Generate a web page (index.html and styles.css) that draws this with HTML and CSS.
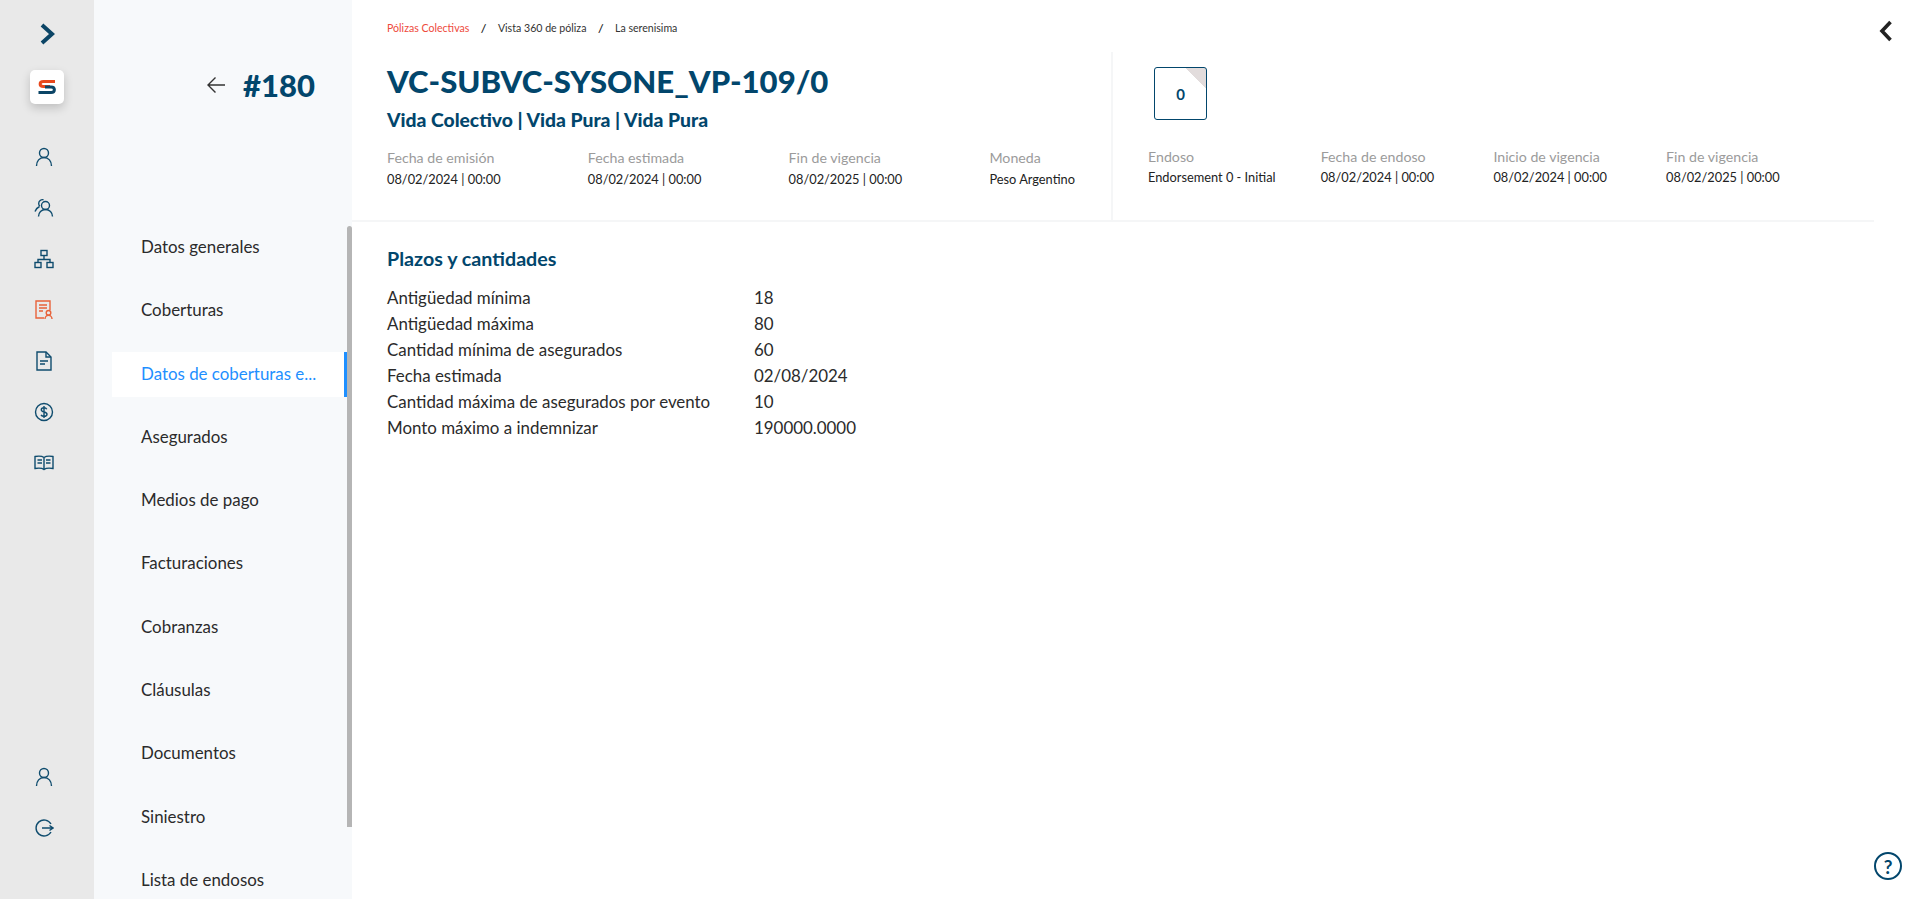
FILE: index.html
```html
<!DOCTYPE html>
<html>
<head>
    <meta charset="utf-8">
    <meta name="viewport" content="width=device-width, initial-scale=1">
    <title>Vista 360 de poliza</title>
    <link rel="stylesheet" href="styles.css">
</head>
<body>
<div class="app">
    <aside class="rail">
        <button class="rail-toggle" aria-label="Expandir">
            <svg width="18" height="22" viewBox="0 0 18 22"><path d="M4 2l10 9-10 9" fill="none" stroke="#0b4566" stroke-width="4"/></svg>
        </button>
        <div class="logo">
            <svg width="20" height="16" viewBox="0 0 20 16">
                <path d="M18 2.500H6.500C2 2.500 2 7.500 6.500 7.500H13" fill="none" stroke="#e8481c" stroke-width="3"/>
                <path d="M1.500 13.500H14c4.500 0 4.500-5.500 0-5.500H8" fill="none" stroke="#0b4566" stroke-width="3"/>
            </svg>
        </div>
        <nav class="rail-icons">
            <a class="rail-icon"><svg width="20" height="20" viewBox="0 0 20 20"><circle cx="10" cy="6" r="4.500"/><path d="M2.500 19c0-5 3-8.500 7.500-8.500s7.500 3.500 7.500 8.500"/></svg></a>
            <a class="rail-icon"><svg width="20" height="20" viewBox="0 0 20 20"><circle cx="11.500" cy="7.500" r="4"/><path d="M4.500 18.500c0-4 3-7 7-7s7 3 7 7"/><path d="M9.500 1.800a3.800 3.800 0 0 0-4.800 3.700c0 1 .4 2 1.100 2.700M5.500 8.500c-2 1-3.800 3-4.500 5"/></svg></a>
            <a class="rail-icon"><svg width="20" height="20" viewBox="0 0 20 20"><rect x="7" y="1.500" width="6" height="5"/><rect x="1" y="13.500" width="6" height="5"/><rect x="13" y="13.500" width="6" height="5"/><path d="M10 6.500v4M4 13.500v-3h12v3"/></svg></a>
            <a class="rail-icon active"><svg width="20" height="20" viewBox="0 0 20 20"><path d="M10 18H2V1h14v9"/><path d="M5 5h8M5 8h8M5 11h4"/><circle cx="14.500" cy="12.800" r="2.300"/><path d="M11 19c0-2 1.500-3.700 3.500-3.700s3.500 1.700 3.500 3.700"/></svg></a>
            <a class="rail-icon"><svg width="20" height="20" viewBox="0 0 20 20"><path d="M3 1h9l5 5v13H3z"/><path d="M12 1v5h5M6 10h8M6 13h5"/></svg></a>
            <a class="rail-icon"><svg width="20" height="20" viewBox="0 0 20 20"><circle cx="10" cy="10" r="8.500"/><path d="M12.800 7.200c-.5-1-1.500-1.500-2.800-1.500-1.500 0-2.700.8-2.700 2.100 0 3 5.700 1.500 5.700 4.400 0 1.300-1.300 2.100-3 2.100-1.300 0-2.400-.5-3-1.500M10 4v12"/></svg></a>
            <a class="rail-icon"><svg width="20" height="20" viewBox="0 0 20 20"><path d="M10 4.500C8 3 4 3 1 3.500v12c3-.5 7-.5 9 1 2-1.500 6-1.500 9-1v-12C16 3 12 3 10 4.500zM10 4.500v12"/><path d="M3.500 7H8M3.500 10H8M12 7h4.500M12 10h4.500"/></svg></a>
        </nav>
        <div class="rail-bottom">
            <a class="rail-icon"><svg width="20" height="20" viewBox="0 0 20 20"><circle cx="10" cy="6" r="4.500"/><path d="M2.500 19c0-5 3-8.500 7.500-8.500s7.500 3.500 7.500 8.500"/></svg></a>
            <a class="rail-icon"><svg width="20" height="20" viewBox="0 0 20 20"><path d="M17 6a8 8 0 1 0 0 8"/><path d="M8 10h11M15.500 7.500L19 10l-3.500 2.500"/></svg></a>
        </div>
    </aside>

    <aside class="side">
        <div class="side-head">
            <svg width="20" height="18" viewBox="0 0 20 18"><path d="M19 9H2M9.500 1.500L2 9l7.500 7.500" fill="none" stroke="#333" stroke-width="1.400"/></svg>
            <span class="side-id">#180</span>
        </div>
        <div class="side-scroll">
            <ul class="side-menu">
                <li>Datos generales</li>
                <li>Coberturas</li>
                <li class="active">Datos de coberturas e...</li>
                <li>Asegurados</li>
                <li>Medios de pago</li>
                <li>Facturaciones</li>
                <li>Cobranzas</li>
                <li>Cláusulas</li>
                <li>Documentos</li>
                <li>Siniestro</li>
                <li>Lista de endosos</li>
            </ul>
            <div class="thumb"></div>
        </div>
    </aside>

    <main class="main">
        <div class="crumbs">
            <span class="crumb-first">Pólizas Colectivas</span>
            <i>/</i>
            <span>Vista 360 de póliza</span>
            <i>/</i>
            <span>La serenisima</span>
        </div>
        <button class="collapse" aria-label="Cerrar">
            <svg width="14" height="22" viewBox="0 0 14 22"><path d="M11.500 2L3 11l8.500 9" fill="none" stroke="#222" stroke-width="3.600"/></svg>
        </button>

        <header class="head">
            <section class="head-left">
                <h1>VC-SUBVC-SYSONE_VP-109/0</h1>
                <h2>Vida Colectivo | Vida Pura | Vida Pura</h2>
                <div class="meta meta-left">
                    <div><label>Fecha de emisión</label><span>08/02/2024 | 00:00</span></div>
                    <div><label>Fecha estimada</label><span>08/02/2024 | 00:00</span></div>
                    <div><label>Fin de vigencia</label><span>08/02/2025 | 00:00</span></div>
                    <div><label>Moneda</label><span>Peso Argentino</span></div>
                </div>
            </section>
            <section class="head-right">
                <div class="endoso-card">0</div>
                <div class="meta meta-right">
                    <div><label>Endoso</label><span>Endorsement 0 - Initial</span></div>
                    <div><label>Fecha de endoso</label><span>08/02/2024 | 00:00</span></div>
                    <div><label>Inicio de vigencia</label><span>08/02/2024 | 00:00</span></div>
                    <div><label>Fin de vigencia</label><span>08/02/2025 | 00:00</span></div>
                </div>
            </section>
        </header>

        <section class="details">
            <h3>Plazos y cantidades</h3>
            <dl class="terms">
                <dt>Antigüedad mínima</dt><dd>18</dd>
                <dt>Antigüedad máxima</dt><dd>80</dd>
                <dt>Cantidad mínima de asegurados</dt><dd>60</dd>
                <dt>Fecha estimada</dt><dd>02/08/2024</dd>
                <dt>Cantidad máxima de asegurados por evento</dt><dd>10</dd>
                <dt>Monto máximo a indemnizar</dt><dd>190000.0000</dd>
            </dl>
        </section>

        <button class="help" aria-label="Ayuda">?</button>
    </main>
</div>
</body>
</html>
```

FILE: styles.css
```css
* {
    box-sizing: border-box;
}

html, body {
    margin: 0;
    height: 100%;
    overflow: hidden;
}

body {
    font-family: "Lato", "Noto Sans", sans-serif;
    color: #2b2b2b;
    background-color: white;
}

button {
    padding: 0;
    border: none;
    background: none;
    font-family: inherit;
    cursor: pointer;
}

.app {
    display: flex;
    height: 899px;
}

/* left icon rail */
.rail {
    width: 94px;
    flex-shrink: 0;
    display: flex;
    flex-direction: column;
    align-items: center;
    background-color: #e9e9e9;
}

.rail-toggle {
    display: flex;
    margin: 23px 0 0 0;
    height: 22px;
}

.logo {
    width: 34px;
    height: 34px;
    margin: 25px 0 0 -1px;
    display: flex;
    align-items: center;
    justify-content: center;
    background-color: white;
    border-radius: 5px;
    box-shadow: 0 4px 10px rgba(0, 0, 0, 0.18);
}

.rail-icons {
    display: flex;
    flex-direction: column;
    gap: 31px;
    margin: 43px 6px 0 0;
}

.rail-bottom {
    display: flex;
    flex-direction: column;
    gap: 31px;
    margin: auto 6px 61px 0;
}

.rail-icon {
    display: block;
    height: 20px;
    color: #0f4c6e;
}

.rail-icon svg {
    display: block;
    fill: none;
    stroke: currentColor;
    stroke-width: 1.4;
}

.rail-icon.active {
    color: #e8623a;
}

/* second column */
.side {
    width: 258px;
    flex-shrink: 0;
    display: flex;
    flex-direction: column;
    background-color: #f7f9fb;
}

.side-head {
    height: 226px;
    display: flex;
    align-items: flex-start;
    padding: 66px 0 0 112px;
    gap: 17px;
}

.side-head svg {
    margin-top: 10px;
}

.side-id {
    font-size: 31px;
    font-weight: 900;
    line-height: 38px;
    color: #02466c;
}

.side-scroll {
    flex: 1;
    min-height: 0;
    display: flex;
    overflow: hidden;
}

.side-menu {
    width: 253px;
    flex-shrink: 0;
    margin: -1px 0 0;
    padding: 0 0 0 18px;
    list-style: none;
    font-size: 16.9px;
}

.side-menu li {
    height: 45px;
    margin-bottom: 18.3px;
    line-height: 43px;
    padding-left: 29px;
    white-space: nowrap;
}

.side-menu li.active {
    color: #1e8fff;
    background-color: white;
    border-right: 3px solid #1e8fff;
}

.thumb {
    width: 5px;
    height: 601px;
    background-color: #b5b5b5;
    border-radius: 3px 3px 0 0;
}

/* main area */
.main {
    flex: 1;
    min-width: 0;
    position: relative;
}

.crumbs {
    height: 52px;
    display: flex;
    align-items: flex-start;
    gap: 12px;
    padding: 21px 0 0 35px;
    font-size: 10.6px;
    line-height: 14px;
    color: #333;
}

.crumbs i {
    font-weight: 700;
    color: #222;
}

.crumb-first {
    color: #ee4a3c;
}

.collapse {
    position: absolute;
    top: 20px;
    right: 27px;
}

.head {
    height: 170px;
    width: 1522px;
    display: flex;
    border-bottom: 2px solid #f5f6f7;
}

.head-left {
    width: 761px;
    padding-left: 35px;
    border-right: 2px solid #f5f6f7;
}

.head-left h1 {
    margin: 9px 0 0;
    font-size: 31.1px;
    line-height: 40px;
    font-weight: 900;
    color: #02466c;
}

.head-left h2 {
    margin: 7px 0 0;
    font-size: 19.3px;
    line-height: 24px;
    font-weight: 900;
    color: #02466c;
}

.meta {
    display: grid;
    font-size: 12.8px;
}

.meta-left {
    grid-template-columns: repeat(4, 200.8px);
    margin-top: 15px;
}

.meta-right {
    grid-template-columns: repeat(4, 172.7px);
    margin: 26px 0 0 35px;
}

.meta label {
    display: block;
    font-size: 14.2px;
    line-height: 21px;
    color: #9b9b9b;
}

.meta span {
    display: block;
    line-height: 21px;
    color: #222;
    white-space: nowrap;
}

.meta-left span {
    margin-top: 1px;
}

.endoso-card {
    width: 53px;
    height: 53px;
    margin: 15px 0 0 41px;
    display: flex;
    align-items: center;
    justify-content: center;
    font-size: 15px;
    font-weight: 700;
    color: #02466c;
    border: 1px solid #02466c;
    border-radius: 3px;
    background: linear-gradient(45deg, white 80%, #e2dcdc 80%);
}

.details {
    padding: 25px 0 0 35px;
}

.details h3 {
    margin: 0 0 14px;
    font-size: 19.7px;
    line-height: 24px;
    font-weight: 700;
    color: #02466c;
}

.terms {
    display: grid;
    grid-template-columns: 367px 1fr;
    grid-auto-rows: 26px;
    margin: 0;
    font-size: 16.9px;
    line-height: 26px;
}

.terms dd {
    margin: 0;
}

.help {
    position: absolute;
    right: 18px;
    bottom: 19px;
    width: 28px;
    height: 28px;
    font-size: 19px;
    line-height: 23px;
    font-weight: 700;
    color: #02466c;
    border: 2.500px solid #02466c;
    border-radius: 50%;
}
```
